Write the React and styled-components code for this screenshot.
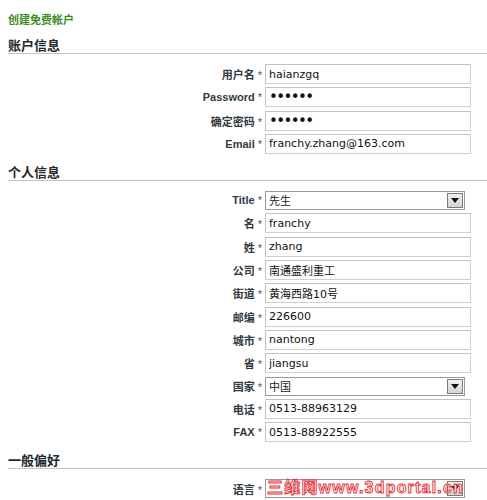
import React from 'react';
import styled, { createGlobalStyle } from 'styled-components';

const GlobalStyle = createGlobalStyle`
  html, body {
    margin: 0;
    padding: 0;
    background: #ffffff;
  }
  body {
    font-family: "Liberation Sans", "Noto Sans CJK SC", sans-serif;
    color: #333333;
  }
`;

const Page = styled.div`
  width: 479px;
  padding: 12px 0 0 8px;
`;

const FormTitle = styled.div`
  font-family: "Noto Sans CJK SC", sans-serif;
  font-size: 11px;
  line-height: 14px;
  font-weight: bold;
  color: #3b8c1c;
  margin-bottom: 11px;
`;

const Section = styled.section`
  & + & {
    margin-top: 10px;
  }
`;

const SectionHeading = styled.h2`
  margin: 0 0 10px 0;
  font-family: "Noto Sans CJK SC", sans-serif;
  font-size: 13px;
  line-height: 16px;
  font-weight: bold;
  color: #222a30;
  border-bottom: 1px solid #c4c4c4;
`;

const FieldGrid = styled.div`
  display: grid;
  grid-template-columns: 254px auto;
  column-gap: 3px;
  row-gap: 3.33px;
  align-items: center;
`;

const Label = styled.label`
  text-align: right;
  font-family: "Liberation Sans", "Noto Sans CJK SC", sans-serif;
  font-size: 11px;
  font-weight: bold;
  color: #333a40;
  white-space: nowrap;
`;

const Star = styled.span`
  font-weight: normal;
  color: #555;
  margin-left: 3px;
`;

const TextInput = styled.input`
  box-sizing: border-box;
  width: 206px;
  height: 20px;
  margin: 0;
  padding: 0 3px;
  border: 1px solid #cfcfcf;
  border-top-color: #c2c2c2;
  border-left-color: #c2c2c2;
  background: #ffffff;
  font-family: "DejaVu Sans", "Noto Sans CJK SC", sans-serif;
  font-size: ${(p) => (p.type === 'password' ? '15px' : '11px')};
  letter-spacing: ${(p) => (p.type === 'password' ? '-1.6px' : '0')};
  color: #111;
  outline: none;
`;

const SelectBox = styled.div`
  position: relative;
  box-sizing: border-box;
  width: 200px;
  height: 19px;
  display: flex;
  align-items: center;
  justify-content: space-between;
  border: 1px solid #9a9a9a;
  background: #ffffff;
  padding: 0 1px 0 3px;
  font-family: "Noto Sans CJK SC", sans-serif;
  font-size: 11px;
  color: #222;
`;

const DropButton = styled.span`
  box-sizing: border-box;
  width: 16px;
  height: 15px;
  display: flex;
  align-items: center;
  justify-content: center;
  border: 1px solid #7a7a7a;
  background: linear-gradient(#f0f0f0, #d4d4d4);
`;

const Watermark = styled.span`
  position: absolute;
  left: 1px;
  top: -2px;
  font-family: "Liberation Sans", "Noto Sans CJK SC", sans-serif;
  font-size: 16px;
  font-weight: bold;
  line-height: 20px;
  white-space: nowrap;
  color: #fff0f0;
  -webkit-text-stroke: 0.9px #e3343a;
  letter-spacing: 1.2px;
`;

const Arrow = () => (
  <svg width="8" height="5" viewBox="0 0 8 5">
    <path d="M0 0 H8 L4 5 Z" fill="#111" />
  </svg>
);

const Select = ({ value, children }) => (
  <SelectBox>
    <span>{value}</span>
    <DropButton><Arrow /></DropButton>
    {children}
  </SelectBox>
);

const Field = ({ label, children }) => (
  <>
    <Label>{label}<Star>*</Star></Label>
    {children}
  </>
);

const account = [
  { label: '用户名', value: 'haianzgq' },
  { label: 'Password', value: '123456', type: 'password' },
  { label: '确定密码', value: '123456', type: 'password' },
  { label: 'Email', value: 'franchy.zhang@163.com' },
];

const personal = [
  { label: 'Title', value: '先生', select: true },
  { label: '名', value: 'franchy' },
  { label: '姓', value: 'zhang' },
  { label: '公司', value: '南通盛利重工' },
  { label: '街道', value: '黄海西路10号' },
  { label: '邮编', value: '226600' },
  { label: '城市', value: 'nantong' },
  { label: '省', value: 'jiangsu' },
  { label: '国家', value: '中国', select: true },
  { label: '电话', value: '0513-88963129' },
  { label: 'FAX', value: '0513-88922555' },
];

const renderFields = (fields) =>
  fields.map((f) => (
    <Field key={f.label} label={f.label}>
      {f.select ? (
        <Select value={f.value} />
      ) : (
        <TextInput type={f.type || 'text'} value={f.value} readOnly />
      )}
    </Field>
  ));

export default function App() {
  return (
    <Page>
      <GlobalStyle />
      <FormTitle>创建免费帐户</FormTitle>

      <Section>
        <SectionHeading>账户信息</SectionHeading>
        <FieldGrid>{renderFields(account)}</FieldGrid>
      </Section>

      <Section>
        <SectionHeading>个人信息</SectionHeading>
        <FieldGrid>{renderFields(personal)}</FieldGrid>
      </Section>

      <Section>
        <SectionHeading>一般偏好</SectionHeading>
        <FieldGrid>
          <Field label="语言">
            <Select value="">
              <Watermark>三维网www.3dportal.cn</Watermark>
            </Select>
          </Field>
        </FieldGrid>
      </Section>
    </Page>
  );
}
